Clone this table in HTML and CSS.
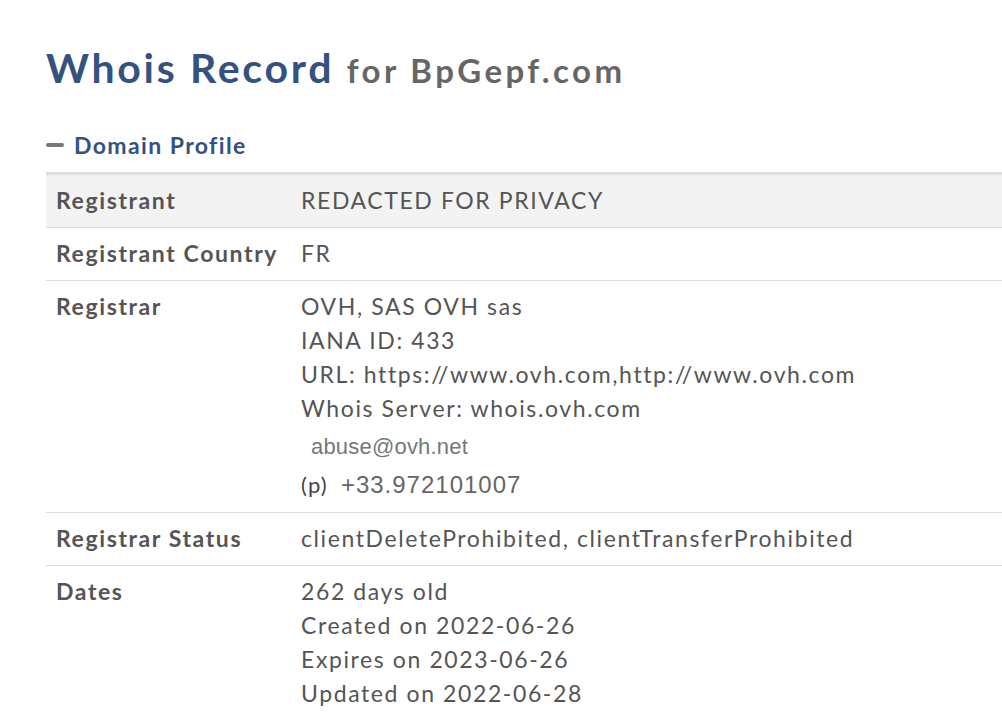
FILE: index.html
```html
<!DOCTYPE html>
<html lang="en">
<head>
    <meta charset="UTF-8">
    <meta name="viewport" content="width=device-width, initial-scale=1.0">
    <title>Whois Record for BpGepf.com</title>
    <link rel="stylesheet" href="styles.css">
</head>
<body>
    <div class="page">
        <h1 class="titulo">Whois Record <span class="dominio">for BpGepf.com</span></h1>

        <h2 class="secao"><span class="menos"></span>Domain Profile</h2>

        <table class="perfil">
            <tr class="destaque">
                <th>Registrant</th>
                <td>REDACTED FOR PRIVACY</td>
            </tr>
            <tr>
                <th>Registrant Country</th>
                <td>FR</td>
            </tr>
            <tr>
                <th>Registrar</th>
                <td>
                    <div>OVH, SAS OVH sas</div>
                    <div>IANA ID: 433</div>
                    <div>URL: https://www.ovh.com,http://www.ovh.com</div>
                    <div>Whois Server: whois.ovh.com</div>
                    <div class="email">abuse@ovh.net</div>
                    <div class="fone"><span class="p">(p)</span><span class="numero">+33.972101007</span></div>
                </td>
            </tr>
            <tr>
                <th>Registrar Status</th>
                <td>clientDeleteProhibited, clientTransferProhibited</td>
            </tr>
            <tr>
                <th>Dates</th>
                <td>
                    <div>262 days old</div>
                    <div>Created on 2022-06-26</div>
                    <div>Expires on 2023-06-26</div>
                    <div>Updated on 2022-06-28</div>
                </td>
            </tr>
        </table>
    </div>
</body>
</html>
```

FILE: styles.css
```css
body {
    margin: 0;
    padding: 0;
    background-color: #fff;
    font-family: Lato, "Open Sans", sans-serif;
    color: #555;
    overflow: hidden;
}
.page {
    padding: 0 0 0 46px;
}
.titulo {
    margin: 0;
    padding-top: 42px;
    font-size: 41px;
    font-weight: bold;
    letter-spacing: 2.7px;
    color: #34527f;
    line-height: 52px;
}
.dominio {
    font-size: 33px;
    letter-spacing: 3.4px;
    color: #666;
    margin-left: 0;
}
.secao {
    margin: 34px 0 12px 0;
    font-size: 23px;
    font-weight: bold;
    letter-spacing: 1.4px;
    color: #34527f;
    line-height: 30px;
    display: flex;
    align-items: center;
}
.menos {
    display: inline-block;
    width: 18px;
    height: 4px;
    border-radius: 2px;
    background-color: #777;
    margin-right: 10px;
}
.perfil {
    width: 100%;
    border-collapse: collapse;
    border-top: 3px solid #ddd;
    font-size: 23px;
    letter-spacing: 1.6px;
    line-height: 34px;
}
.perfil th,
.perfil td {
    text-align: left;
    vertical-align: top;
    padding: 8px 10px 10px 10px;
    border-bottom: 1px solid #ddd;
}
.perfil th {
    width: 225px;
    font-weight: bold;
}
.destaque th,
.destaque td {
    background-color: #f3f3f3;
}
.email {
    font-family: "Liberation Sans", Arial, sans-serif;
    color: #777;
    font-size: 22px;
    letter-spacing: 0.2px;
    padding-left: 10px;
    line-height: 40px;
    margin-top: 2px;
}
.fone {
    line-height: 34px;
}
.p {
    font-size: 22px;
    letter-spacing: 1.2px;
    color: #444;
    margin-right: 13px;
}
.numero {
    font-family: "Liberation Sans", Arial, sans-serif;
    font-size: 24px;
    letter-spacing: 1px;
    color: #666;
}
```
